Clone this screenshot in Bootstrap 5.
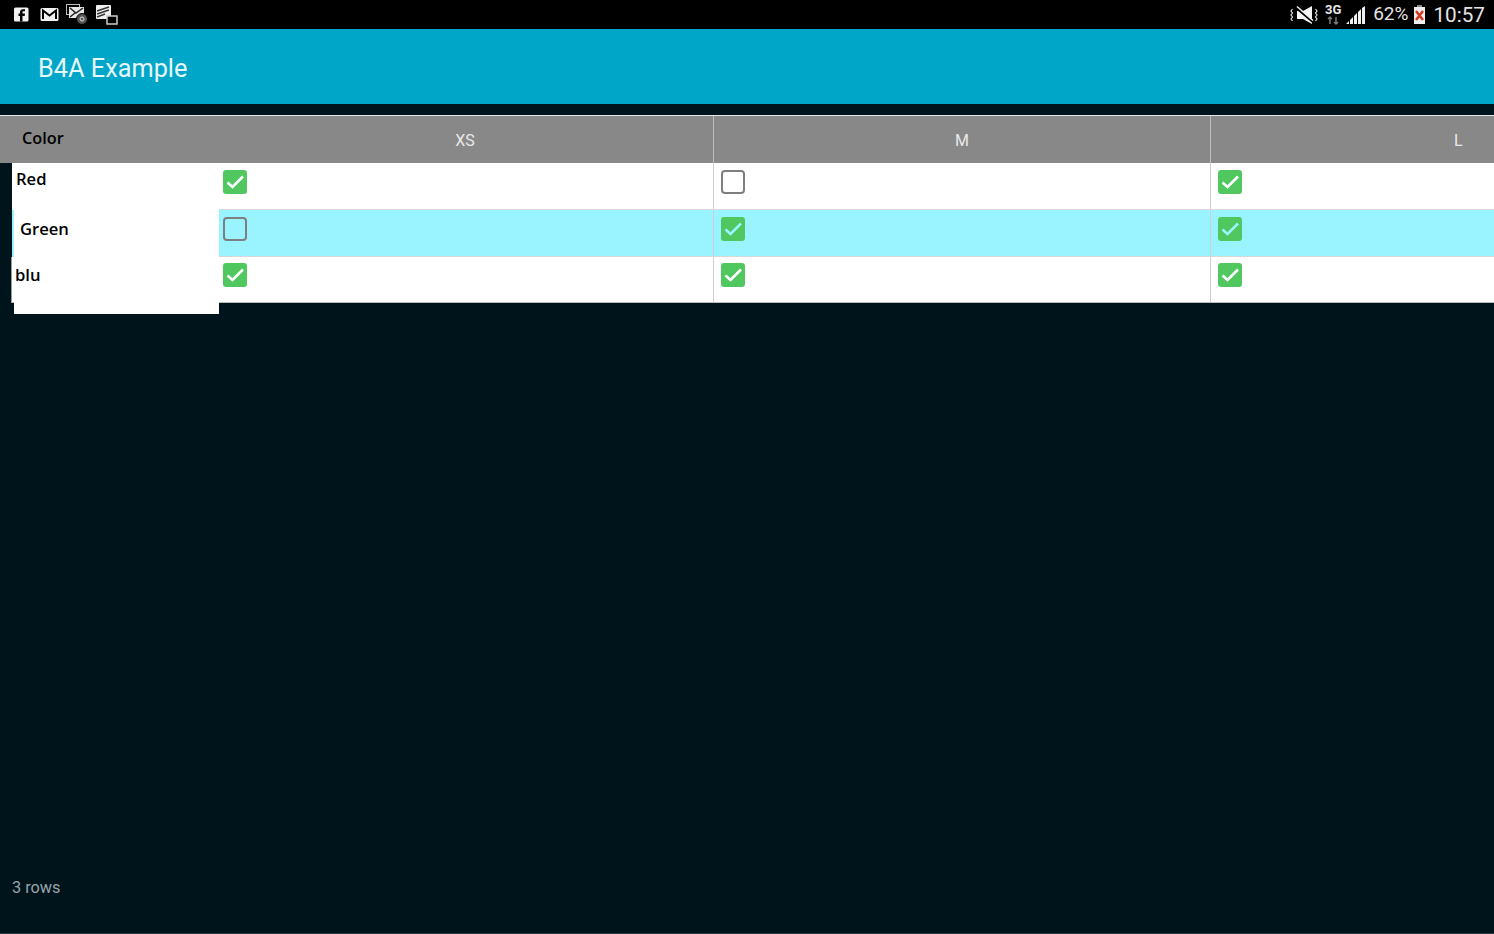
<!DOCTYPE html>
<html lang="en">

<head>
    <meta charset="UTF-8">
    <meta name="viewport" content="width=device-width, initial-scale=1.0">
    <title>B4A Example</title>
    <link href="https://cdn.jsdelivr.net/npm/bootstrap@5.3.0/dist/css/bootstrap.min.css" rel="stylesheet">
    <style>
        html, body { height: 100%; }
        body { background: #00141c; overflow: hidden; font-family: Roboto, sans-serif; }
        .phone { height: 934px; border-bottom: 1px solid #26363c; }

        .status-bar { height: 29px; background: #000; color: #e4e4e4; padding: 0 9px 0 0; }
        .status-left { padding-left: 14px; gap: 8px; }
        .status-third { margin-left: -1px; }
        .status-speaker { margin-right: 7px; }
        .status-signal { margin-left: 2px; }
        .status-pct { font-size: 19px; margin: 0 5px 0 7px; }
        .status-clock { font-size: 20.700px; margin-left: 6px; padding-top: 3px; }

        .app-bar { height: 75px; background: #00a6c8; color: #e6f8fc; font-size: 25.300px; padding: 4px 0 0 38px; }
        .app-gap { height: 11px; }

        .grid-head { height: 48px; border-top: 1px solid #e8e8e8; background: #888; color: #e8e8e8; font-size: 16px; }
        .cell-first { width: 219px; flex: none; }
        .cell-col { width: 497px; flex: none; border-left: 1px solid #bdbdbd; padding-top: 3px; }
        .cell-col.no-line { border-left: 0; width: 494px; padding-right: 2px; }
        .cell-col.last-col { flex: 1 1 0; width: auto; min-width: 0; justify-content: flex-start !important; padding-left: 243px; }
        .head-color { color: #000; font-family: "Open Sans", sans-serif; font-weight: 600; font-size: 16.300px; padding-left: 22px; padding-bottom: 3px; }

        .grid-row { height: 47px; margin-left: 12px; }
        .grid-row.alt { background: #99f4ff; }
        .label-cell { width: 207px; flex: none; background: #fff; color: #000; font-family: "Open Sans", sans-serif; font-weight: 600; font-size: 16.600px; }
        .alt .label-cell { margin-left: 2px; width: 205px; padding-left: 6px; }
        .check-cell { width: 497px; flex: none; padding: 7px 0 0 7px; border-left: 1px solid #cfcfcf; border-bottom: 1px solid #d8d8d8; background: #fff; color: #fff; }
        .alt .check-cell { background: #99f4ff; color: #99f4ff; }
        .check-cell.no-line { border-left: 0; width: 494px; padding-left: 4px; }
        .check-cell.last-col { flex: 1 1 0; width: auto; min-width: 0; }
        .row-red .label-cell { padding: 4px 0 0 4px; }
        .row-green .label-cell { padding-top: 7px; }
        .row-blu .label-cell { padding: 6px 0 0 3px; }
        .row-blu { height: 46px; border-bottom: 1px solid #bcbcbc; border-left: 1px solid #9a9a9a; margin-left: 11px; }
        .row-blu .check-cell { border-bottom: 0; padding-top: 6px; }
        .label-tail { width: 205px; height: 12px; margin: -1px 0 0 14px; background: #fff; }

        .box { display: block; width: 24px; height: 24px; }
        .foot-count { margin-top: auto; padding: 0 0 35px 12px; color: #98a4a9; font-size: 16.300px; line-height: 20px; }
    </style>
</head>

<body>
    <div class="phone d-flex flex-column">

        <!-- barra de estado -->
        <div class="status-bar d-flex align-items-center justify-content-between">
            <div class="status-left d-flex align-items-center">
                <svg width="18" height="16" viewBox="0 0 18 16">
                    <rect x="0" y="0.500" width="14.500" height="14" rx="1.500" fill="#f2f2f2"/>
                    <path d="M8.500 14.500V9h2.200l.3-2.400H8.500V5.200c0-.7.3-1 1-1H11V2.200H9.100C7 2.200 6 3.400 6 5v1.600H4.500V9H6v5.500z" fill="#000"/>
                </svg>
                <svg width="19" height="15" viewBox="0 0 19 15">
                    <rect x="0.500" y="1" width="18" height="13" rx="1.500" fill="#f2f2f2"/>
                    <path d="M3 12V3.500L9.500 8.500 16 3.500V12" fill="none" stroke="#000" stroke-width="2"/>
                </svg>
                <svg class="status-third" width="22" height="21" viewBox="0 0 22 21">
                    <rect x="0.500" y="0.500" width="13" height="10" fill="none" stroke="#bdbdbd"/>
                    <rect x="3" y="3" width="15" height="11" fill="#e8e8e8"/>
                    <path d="M4 4l6 5 7-5M4 13l5-4" fill="none" stroke="#222" stroke-width="1.500"/>
                    <circle cx="16" cy="15" r="5.500" fill="#555" stroke="#000"/>
                    <circle cx="16" cy="15" r="2" fill="none" stroke="#ddd"/>
                </svg>
                <svg width="22" height="21" viewBox="0 0 22 21">
                    <rect x="0" y="1" width="15" height="14" rx="1" fill="#f0f0f0"/>
                    <path d="M1 7l12-4M1 10l12-4M1 13l8-3" stroke="#333" stroke-width="1.500"/>
                    <rect x="11" y="12" width="10" height="8" fill="#000" stroke="#ccc" stroke-width="1.500"/>
                </svg>
            </div>
            <div class="d-flex align-items-center">
                <svg class="status-speaker" width="28" height="20" viewBox="0 0 28 20">
                    <path d="M2.500 4l-1.500 2 1.500 2-1.500 2 1.500 2-1.500 2 1.500 2" fill="none" stroke="#ddd" stroke-width="1.200"/>
                    <path d="M7 6h6l9-5v18l-9-5H7z" fill="#f4f4f4"/>
                    <path d="M5 2l19 16" stroke="#000" stroke-width="2"/>
                    <path d="M7 1.500l16 14" stroke="#f4f4f4" stroke-width="1.500"/>
                    <path d="M25.500 4L27 6l-1.500 2L27 10l-1.500 2L27 14l-1.500 2" fill="none" stroke="#ddd" stroke-width="1.200"/>
                </svg>
                <svg width="18" height="24" viewBox="0 0 18 24">
                    <text x="0" y="11" font-family="Roboto, sans-serif" font-weight="700" font-size="13" fill="#e8e8e8">3G</text>
                    <path d="M5 14v7M3 16l2-2 2 2M11 14v7M9 19l2 2 2-2" fill="none" stroke="#777" stroke-width="1.500"/>
                </svg>
                <svg class="status-signal" width="21" height="20" viewBox="0 0 21 20">
                    <path d="M1 19h3v-3zM5 19h3v-7l-3 3zM9 19h3V8l-3 3zM13 19h3V4l-3 3zM17 19h3V1l-3 2z" fill="#f0f0f0"/>
                </svg>
                <span class="status-pct">62%</span>
                <svg width="14" height="20" viewBox="0 0 14 20">
                    <rect x="4" y="0" width="5" height="3" fill="#888"/>
                    <rect x="1" y="2" width="11" height="17" fill="#eee"/>
                    <path d="M3 6l7 9M10 6l-7 9" stroke="#d63a1e" stroke-width="2.500"/>
                </svg>
                <span class="status-clock">10:57</span>
            </div>
        </div>

        <!-- titulo -->
        <div class="app-bar d-flex align-items-center">B4A Example</div>
        <div class="app-gap"></div>

        <!-- encabezado -->
        <div class="grid-head d-flex">
            <div class="cell-first head-color d-flex align-items-center">Color</div>
            <div class="cell-col no-line d-flex align-items-center justify-content-center">XS</div>
            <div class="cell-col d-flex align-items-center justify-content-center">M</div>
            <div class="cell-col last-col d-flex align-items-center">L</div>
        </div>

        <!-- filas -->
        <div id="filas"></div>
        <div class="label-tail"></div>

        <div class="foot-count">3 rows</div>
    </div>

    <script src="https://cdn.jsdelivr.net/npm/bootstrap@5.3.0/dist/js/bootstrap.bundle.min.js"></script>
    <script>
        const filas = [
            { nombre: 'Red', clase: 'row-red', marcas: [true, false, true] },
            { nombre: 'Green', clase: 'row-green alt', marcas: [false, true, true] },
            { nombre: 'blu', clase: 'row-blu', marcas: [true, true, true] }
        ];

        function caja(marcada) {
            if (marcada) {
                return `<svg class="box" viewBox="0 0 24 24"><rect width="24" height="24" rx="3" fill="#50c85f"/><path d="M4.500 12.500l5 4.500L20 6.500" fill="none" stroke="currentColor" stroke-width="2.600"/></svg>`;
            }
            return `<svg class="box" viewBox="0 0 24 24"><rect x="1" y="1" width="22" height="22" rx="3" fill="none" stroke="#7f7f7f" stroke-width="2"/></svg>`;
        }

        const contenedor = document.getElementById('filas');
        filas.forEach(fila => {
            const row = document.createElement('div');
            row.className = `grid-row d-flex ${fila.clase}`;
            let html = `<div class="label-cell">${fila.nombre}</div>`;
            fila.marcas.forEach((marca, i) => {
                const extra = i === 0 ? 'no-line' : (i === 2 ? 'last-col' : '');
                html += `<div class="check-cell ${extra}">${caja(marca)}</div>`;
            });
            row.innerHTML = html;
            contenedor.appendChild(row);
        });
    </script>
</body>

</html>
